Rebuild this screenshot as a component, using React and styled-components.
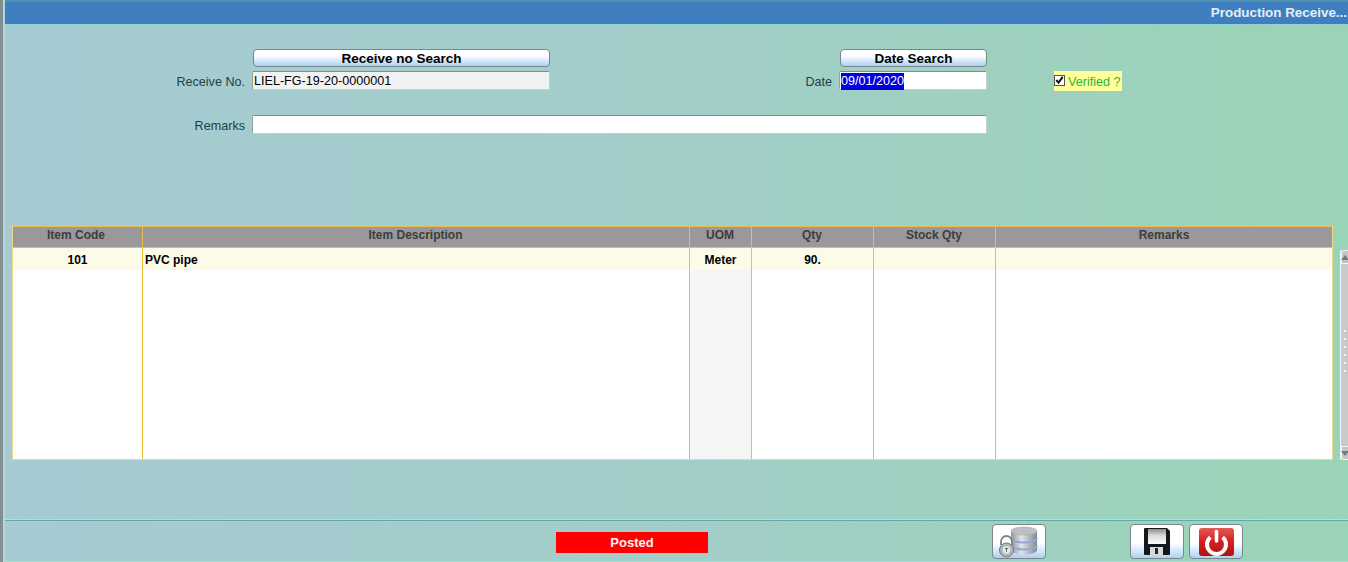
import React from 'react'
import styled, { createGlobalStyle } from 'styled-components'

const GlobalStyle = createGlobalStyle`
  html, body {
    margin: 0;
    padding: 0;
    height: 100%;
    overflow: hidden;
    background: #a3cdc8;
    font-family: "Liberation Sans", Arial, sans-serif;
  }
  #root { height: 100%; }
`

const columns = '130px 547px 62px 122px 122px 337px'

const items = [
  { code: '101', description: 'PVC pipe', uom: 'Meter', qty: '90.' }
]

const DatabaseIcon = () => (
  <svg width="52" height="33" viewBox="0 0 52 33">
    <defs>
      <linearGradient id="dbBody" x1="0" x2="1" y1="0" y2="0">
        <stop offset="0" stopColor="#8f959b" />
        <stop offset="0.4" stopColor="#e2e4e7" />
        <stop offset="1" stopColor="#83898f" />
      </linearGradient>
    </defs>
    <path d="M18 6v19c0 2.500 6 4.500 13 4.500S44 27.500 44 25V6z" fill="url(#dbBody)" />
    <ellipse cx="31" cy="6" rx="13" ry="4" fill="#bcc0c4" stroke="#a2a7ad" strokeWidth="0.600" />
    <path d="M18 13c0 2.500 6 4.500 13 4.500S44 15.500 44 13" fill="none" stroke="#8fa8d8" strokeWidth="1.800" />
    <path d="M18 20c0 2.500 6 4.500 13 4.500S44 22.500 44 20" fill="none" stroke="#8fa8d8" strokeWidth="1.800" />
    <path d="M8 20v-3.500a5.500 5.500 0 0 1 11 0V20" fill="none" stroke="#7d8389" strokeWidth="1.800" />
    <circle cx="13.500" cy="25" r="7" fill="#b5babf" stroke="#6f757b" strokeWidth="1" />
    <circle cx="13.500" cy="25" r="4.500" fill="#e4e7ea" stroke="#8b9096" strokeWidth="0.600" />
    <path d="M12 23.500h3M13.500 23.500v3.500" stroke="#555b61" strokeWidth="0.900" fill="none" />
  </svg>
)

const SaveIcon = () => (
  <svg width="28" height="29" viewBox="0 0 28 29">
    <defs>
      <linearGradient id="saveLabel" x1="0" x2="0" y1="0" y2="1">
        <stop offset="0" stopColor="#8c8c8c" />
        <stop offset="0.45" stopColor="#dcdcdc" />
        <stop offset="1" stopColor="#fafafa" />
      </linearGradient>
    </defs>
    <path d="M2 1h22l3 3v23a1 1 0 0 1-1 1H2a1 1 0 0 1-1-1V2a1 1 0 0 1 1-1z" fill="#14181c" />
    <rect x="5" y="2" width="18" height="15" fill="url(#saveLabel)" />
    <rect x="7" y="20" width="13" height="8" fill="#d8d8d8" />
    <rect x="12" y="21" width="3" height="6" fill="#22262a" />
  </svg>
)

const PowerIcon = () => (
  <svg width="37" height="30" viewBox="0 0 37 30">
    <defs>
      <linearGradient id="powerBg" x1="0" x2="0" y1="0" y2="1">
        <stop offset="0" stopColor="#e25a58" />
        <stop offset="0.45" stopColor="#d42322" />
        <stop offset="1" stopColor="#b01112" />
      </linearGradient>
    </defs>
    <rect x="1" y="1" width="35" height="28" rx="3" fill="url(#powerBg)" />
    <path d="M12.400 10.200A9.500 9.500 0 1 0 24.600 10.200" fill="none" stroke="#fff" strokeWidth="4" />
    <path d="M18.500 4.500v9.500" fill="none" stroke="#fff" strokeWidth="3.600" strokeLinecap="round" />
  </svg>
)

const App = () => (
  <>
    <GlobalStyle />
    <Page>
      <TitleBar>Production Receive...</TitleBar>
      <Main>
        <SearchForm>
          <span />
          <SearchButton>Receive no Search</SearchButton>
          <span />
          <SearchButton>Date Search</SearchButton>
          <span />
          <Label>Receive No.</Label>
          <TextField $readOnly>LIEL-FG-19-20-0000001</TextField>
          <Label>Date</Label>
          <TextField><Selected>09/01/2020</Selected></TextField>
          <Verified>
            <CheckBox>
              <svg width="10" height="10" viewBox="0 0 10 10">
                <path d="M1.500 5l2.500 3L8.500 1.500" fill="none" stroke="#111" strokeWidth="2.200" />
              </svg>
            </CheckBox>
            Verified ?
          </Verified>
          <RemarksLabel>Remarks</RemarksLabel>
          <RemarksField />
        </SearchForm>
        <GridRow>
          <Table>
            <HeaderRow>
              <HeaderCell $offset={3}>Item Code</HeaderCell>
              <HeaderCell>Item Description</HeaderCell>
              <HeaderCell>UOM</HeaderCell>
              <HeaderCell>Qty</HeaderCell>
              <HeaderCell>Stock Qty</HeaderCell>
              <HeaderCell $last>Remarks</HeaderCell>
            </HeaderRow>
            {items.map(item => (
              <DataRow key={item.code}>
                <Cell $center>{item.code}</Cell>
                <Cell>{item.description}</Cell>
                <Cell $center>{item.uom}</Cell>
                <Cell $center>{item.qty}</Cell>
                <Cell />
                <Cell $last />
              </DataRow>
            ))}
            <EmptyRow>
              <Cell />
              <Cell />
              <Cell $shaded />
              <Cell />
              <Cell />
              <Cell $last />
            </EmptyRow>
          </Table>
          <ScrollBar>
            <ScrollEnd $top><Arrow $up /></ScrollEnd>
            <Grip>
              {[0, 1, 2, 3, 4, 5].map(i => <GripDot key={i} />)}
            </Grip>
            <ScrollEnd><Arrow /></ScrollEnd>
          </ScrollBar>
        </GridRow>
      </Main>
      <Footer>
        <Status>Posted</Status>
        <IconButton $gap={284}><DatabaseIcon /></IconButton>
        <IconButton $gap={84}><SaveIcon /></IconButton>
        <IconButton $gap={5}><PowerIcon /></IconButton>
      </Footer>
    </Page>
  </>
)

const Page = styled.div`
  height: 562px;
  width: 1348px;
  box-sizing: border-box;
  display: flex;
  flex-direction: column;
  border-left: 3px solid #7f9092;
  padding-left: 2px;
  box-shadow: inset 2px 0 0 #bcd4d6;
  background: linear-gradient(90deg, #a6cbd3 0%, #a2cec9 50%, #9ad4b6 100%);
`
const TitleBar = styled.div`
  height: 25px;
  box-sizing: border-box;
  padding-right: 1px;
  background: #3f7fbf;
  border-top: 2px solid #4f8fb0;
  border-bottom: 1px solid #8fd0d0;
  color: #e4eef6;
  font-size: 13.4px;
  font-weight: bold;
  line-height: 22px;
  text-align: right;
`
const Main = styled.div`
  flex: 1;
  display: flex;
  flex-direction: column;
  min-height: 0;
`
const SearchForm = styled.div`
  display: grid;
  grid-template-columns: 247px 298px 289px 148px 1fr;
  grid-template-rows: 18px 19px 40px;
  row-gap: 4px;
  padding-top: 24px;
  align-items: start;
`
const SearchButton = styled.button`
  margin: 0 0 0 1px;
  padding: 1px 0 0;
  height: 18px;
  box-sizing: border-box;
  border: 1px solid #7c8688;
  border-radius: 4px;
  background: linear-gradient(180deg, #fff 0%, #fff 35%, #a9d2f5 100%);
  color: #000;
  font-family: "Liberation Sans", Arial, sans-serif;
  font-size: 13.5px;
  font-weight: bold;
  line-height: 16px;
`
const Label = styled.div`
  padding-right: 7px;
  color: #1f3f44;
  font-size: 12.6px;
  line-height: 22px;
  text-align: right;
`
const RemarksLabel = styled(Label)`
  margin-top: 21px;
  grid-column: 1;
`
const TextField = styled.div`
  box-sizing: border-box;
  height: 19px;
  padding: 2px 0 0 1px;
  background: ${props => props.$readOnly ? '#f2f2f2' : '#fff'};
  border: 1px solid #c3d0d0;
  border-top-color: #7b9090;
  border-left-color: #8fa3a3;
  border-radius: 2px;
  color: #000;
  font-size: 12.6px;
  line-height: 15px;
`
const Selected = styled.span`
  display: inline-block;
  background: #0000e0;
  color: #fff;
  margin-top: -1px;
  padding: 1px 0;
`
const RemarksField = styled(TextField)`
  margin-top: 21px;
  grid-column: 2 / span 3;
  background: #fff;
`
const Verified = styled.div`
  margin-left: 67px;
  width: 68px;
  height: 20px;
  box-sizing: border-box;
  padding-top: 2px;
  display: flex;
  align-items: center;
  background: #ffff99;
  color: #1fb84a;
  font-size: 12.6px;
  white-space: nowrap;
`
const CheckBox = styled.span`
  width: 11px;
  height: 11px;
  box-sizing: border-box;
  margin-right: 3px;
  margin-top: -4px;
  border: 1px solid #555;
  background: #fff;
  display: flex;
  align-items: center;
  justify-content: center;
`
const GridRow = styled.div`
  margin-top: 92px;
  padding-left: 7px;
  display: flex;
`
const Table = styled.div`
  width: 1321px;
  box-sizing: border-box;
  background: #fff;
  border: 1px solid #ecd98a;
  border-top: 0;
`
const HeaderRow = styled.div`
  display: grid;
  grid-template-columns: ${columns};
  height: 22px;
  box-sizing: border-box;
  background: #9a989a;
  border-top: 1px solid #e7bc52;
  border-bottom: 1px solid #e7bc52;
`
const HeaderCell = styled.div`
  box-sizing: border-box;
  padding-right: ${props => props.$offset || 1}px;
  border-right: ${props => props.$last ? '0' : '1px solid #e7bc52'};
  color: #3d3d3d;
  font-size: 12px;
  font-weight: bold;
  line-height: 17px;
  text-align: center;
`
const DataRow = styled.div`
  display: grid;
  grid-template-columns: ${columns};
  height: 22px;
  background: #fbfbe8;
`
const EmptyRow = styled(DataRow)`
  height: 189px;
  background: #fff;
`
const Cell = styled.div`
  box-sizing: border-box;
  padding-left: ${props => props.$center ? '0' : '2px'};
  background: ${props => props.$shaded ? '#f5f5f5' : 'transparent'};
  border-right: ${props => props.$last ? '0' : '1px solid #ecc234'};
  color: #000;
  font-size: 12px;
  font-weight: bold;
  line-height: 25px;
  text-align: ${props => props.$center ? 'center' : 'left'};
`
const ScrollBar = styled.div`
  margin: 24px 0 0 7px;
  width: 8px;
  height: 210px;
  display: flex;
  flex-direction: column;
  box-sizing: border-box;
  background: #c8cacb;
  border-left: 1px solid #eef8f8;
`
const ScrollEnd = styled.div`
  height: 14px;
  box-sizing: border-box;
  border-radius: ${props => props.$top ? '4px 0 0 0' : '0 0 0 4px'};
  border: 1px solid #f0f6f6;
  border-right: 0;
  background: #c2c4c5;
  display: flex;
  align-items: center;
  justify-content: center;
`
const Arrow = styled.span`
  width: 0;
  height: 0;
  border-left: 4px solid transparent;
  border-right: 4px solid transparent;
  border-${props => props.$up ? 'bottom' : 'top'}: 5px solid #6f7f7f;
`
const Grip = styled.div`
  flex: 1;
  display: flex;
  flex-direction: column;
  justify-content: center;
  align-items: flex-end;
  gap: 6px;
  padding: 0 2px 8px 0;
`
const GripDot = styled.span`
  width: 2px;
  height: 2px;
  background: #f4f4f4;
`
const Footer = styled.div`
  flex: 0 0 43px;
  box-sizing: border-box;
  display: flex;
  align-items: flex-start;
  padding-left: 551px;
  border-top: 1px solid #b0e0d8;
  border-bottom: 1px solid #a9dcd4;
  box-shadow: inset 0 1px 0 #5ea9a9;
`
const Status = styled.div`
  margin-top: 12px;
  width: 152px;
  height: 21px;
  background: #ff0000;
  color: #f6f6f6;
  font-size: 13px;
  font-weight: bold;
  line-height: 21px;
  text-align: center;
`
const IconButton = styled.button`
  margin: 4px 0 0 ${props => props.$gap}px;
  width: 54px;
  height: 35px;
  padding: 0;
  box-sizing: border-box;
  border: 1px solid #7c8688;
  border-radius: 4px;
  background: linear-gradient(180deg, #fff 0%, #fff 55%, #a9d2f5 100%);
  display: flex;
  align-items: center;
  justify-content: center;
`

export default App
